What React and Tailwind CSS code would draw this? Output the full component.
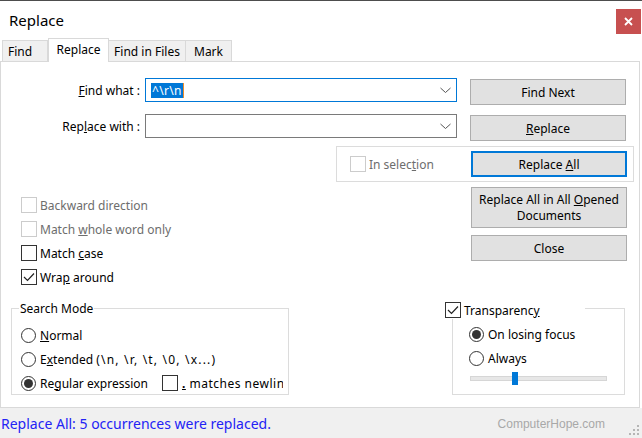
import React from 'react';

const Check = () => (
  <svg width="12" height="10" viewBox="0 0 12 10" className="block">
    <polyline points="1,5 4.5,8.5 11,1.5" fill="none" stroke="#222" strokeWidth="1.2" />
  </svg>
);

const CheckBox = ({ checked, disabled }) => (
  <span
    className={`w-[16px] h-[16px] flex items-center justify-center border bg-white shrink-0 ${
      disabled ? 'border-[#cccccc]' : 'border-[#333333]'
    }`}
  >
    {checked && <Check />}
  </span>
);

const Radio = ({ checked }) => (
  <span className="w-[15px] h-[15px] rounded-full border border-[#333333] bg-white flex items-center justify-center shrink-0">
    {checked && <span className="w-[9px] h-[9px] rounded-full bg-[#333333]" />}
  </span>
);

const Chevron = () => (
  <svg width="11" height="7" viewBox="0 0 11 7" className="block">
    <polyline points="0.5,1 5.5,5.5 10.5,1" fill="none" stroke="#555" strokeWidth="1" />
  </svg>
);

const Button = ({ children, className = '' }) => (
  <div
    className={`w-[156px] flex items-center justify-center text-center bg-[#e1e1e1] leading-[16px] pt-px ${className}`}
  >
    {children}
  </div>
);

const OptionRow = ({ label, checked, disabled }) => (
  <div className="h-[24px] flex items-start">
    <CheckBox checked={checked} disabled={disabled} />
    <span className={`ml-[3px] leading-[18px] ${disabled ? 'text-[#6d6d6d]' : ''}`}>{label}</span>
  </div>
);

export default function App() {
  return (
    <div className="w-[642px] h-[438px] bg-white border-t border-[#4d4d4d] flex flex-col overflow-hidden text-[12px] text-black font-['Noto_Sans',sans-serif]">
      {/* title bar */}
      <div className="h-[37px] flex items-start shrink-0">
        <div className="pl-[9px] pt-[8px] text-[15px] leading-[22px]">Replace</div>
        <div className="ml-auto mt-[8px] mr-[1px] w-[25px] h-[25px] bg-[#c75050] flex items-center justify-center">
          <svg width="9" height="9" viewBox="0 0 9 9">
            <path d="M1 1 L8 8 M8 1 L1 8" stroke="#fff" strokeWidth="1.8" />
          </svg>
        </div>
      </div>

      {/* tabs */}
      <div className="h-[23px] flex items-end pl-[2px] relative z-10 shrink-0">
        <div className="w-[46px] h-[21px] bg-[#f0f0f0] border border-b-0 border-[#d9d9d9] pl-[5px] leading-[21px]">Find</div>
        <div className="w-[61px] h-[24px] -mb-px bg-white border border-b-0 border-[#d9d9d9] flex justify-center leading-[21px]">Replace</div>
        <div className="w-[77px] h-[21px] bg-[#f0f0f0] border border-l-0 border-b-0 border-[#d9d9d9] flex justify-center leading-[21px]">Find in Files</div>
        <div className="w-[46px] h-[21px] bg-[#f0f0f0] border border-l-0 border-b-0 border-[#d9d9d9] flex justify-center leading-[21px]">Mark</div>
      </div>

      {/* panel */}
      <div className="flex-1 border border-[#d9d9d9] mr-[2px] flex flex-col">
        {/* find what */}
        <div className="mt-[16px] flex items-start">
          <div className="w-[139px] text-right leading-[25px]">
            <span className="underline">F</span>ind what :
          </div>
          <div className="ml-[5px] w-[312px] h-[24px] border border-[#0078d7] flex items-center pl-[5px] pr-[5px]">
            <span className="bg-[#0078d7] text-white px-[1px] leading-[15px] tracking-[0.3px]">^\r\n</span>
            <span className="w-px h-[15px] bg-[#f08c28]" />
            <span className="ml-auto"><Chevron /></span>
          </div>
          <Button className="ml-[13px] mt-px h-[26px] border border-[#adadad]">Find Next</Button>
        </div>

        {/* replace with */}
        <div className="mt-[9px] flex items-start">
          <div className="w-[139px] text-right leading-[25px]">
            Rep<span className="underline">l</span>ace with :
          </div>
          <div className="ml-[5px] w-[312px] h-[24px] border border-[#7a7a7a] flex items-center pr-[5px]">
            <span className="ml-auto"><Chevron /></span>
          </div>
          <Button className="ml-[13px] mt-px h-[26px] border border-[#adadad]">
            <span><span className="underline">R</span>eplace</span>
          </Button>
        </div>

        {/* in selection */}
        <div className="mt-[5px] ml-[335px] w-[298px] h-[36px] border border-[#dcdcdc] flex items-start pl-[13px] pr-[6px] shrink-0">
          <div className="mt-[9px] flex items-start">
            <CheckBox disabled />
            <span className="ml-[3px] leading-[18px] text-[#6d6d6d]">
              In selec<span className="underline">t</span>ion
            </span>
          </div>
          <Button className="ml-auto mt-[4px] h-[26px] border-2 border-[#0078d7]">
            <span>Replace <span className="underline">A</span>ll</span>
          </Button>
        </div>

        {/* options + more buttons */}
        <div className="h-[118px] flex shrink-0">
          <div className="pl-[20px] mt-[15px] flex flex-col">
            <OptionRow label="Backward direction" disabled />
            <OptionRow label={<>Match <span className="underline">w</span>hole word only</>} disabled />
            <OptionRow label={<>Match <span className="underline">c</span>ase</>} />
            <OptionRow label={<>Wra<span className="underline">p</span> around</>} checked />
          </div>
          <div className="ml-auto mr-[12px] mt-[5px] flex flex-col">
            <Button className="h-[41px] border border-[#adadad]">
              <span>
                Replace All in All <span className="underline">O</span>pened
                <br />
                Documents
              </span>
            </Button>
            <Button className="mt-[7px] h-[26px] border border-[#adadad]">Close</Button>
          </div>
        </div>

        {/* bottom groups */}
        <div className="flex items-start">
          <div className="mt-[8px] ml-[10px] w-[278px] h-[87px] border border-[#dcdcdc] relative pt-[14px] pl-[9px]">
            <span className="absolute -top-[9px] left-[7px] bg-white px-[1px] leading-[17px]">Search Mode</span>
            <div className="h-[24px] flex items-center">
              <Radio />
              <span className="ml-[4px] mt-px"><span className="underline">N</span>ormal</span>
            </div>
            <div className="h-[24px] flex items-center">
              <Radio />
              <span className="ml-[4px] mt-px">
                E<span className="underline">x</span>tended <span className="tracking-[1.2px]">(\n, \r, \t, \0, \x...)</span>
              </span>
            </div>
            <div className="h-[24px] w-[262px] flex items-center overflow-hidden whitespace-nowrap">
              <Radio checked />
              <span className="ml-[4px] mt-px">Re<span className="underline">g</span>ular expression</span>
              <span className="ml-[14px]"><CheckBox /></span>
              <span className="ml-[4px] mt-px tracking-[0.5px]"><span className="underline font-bold">.</span> matches newline</span>
            </div>
          </div>

          <div className="mt-[8px] ml-[163px] w-[173px] h-[87px] border border-[#dcdcdc] relative pt-[13px] pl-[16px]">
            <div className="absolute -top-[7px] -left-[8px] w-[140px] h-[17px] bg-white flex items-start">
              <CheckBox checked />
              <span className="ml-[3px] leading-[18px]">
                Transparenc<span className="underline">y</span>
              </span>
            </div>
            <div className="h-[24px] flex items-center">
              <Radio checked />
              <span className="ml-[4px] mt-px">On losing focus</span>
            </div>
            <div className="h-[24px] flex items-center">
              <Radio />
              <span className="ml-[4px] mt-px">Always</span>
            </div>
            <div className="mt-[6px] ml-px w-[137px] h-[5px] bg-[#e7e7e7] border border-[#d6d6d6] relative">
              <span className="absolute left-[41px] -top-[5px] w-[6px] h-[13px] bg-[#0078d7]" />
            </div>
          </div>
        </div>
      </div>

      {/* status bar */}
      <div className="h-[30px] bg-[#f0f0f0] flex items-center shrink-0 relative pt-[2px]">
        <span className="pl-[1px] text-[14px] leading-[20px] text-[#2323f5]">Replace All: 5 occurrences were replaced.</span>
        <span className="ml-auto mr-[37px] text-[12px] leading-[20px] text-[#a8a8a8] font-['Liberation_Sans',sans-serif]">ComputerHope.com</span>
        <svg width="11" height="11" viewBox="0 0 11 11" className="absolute right-[2px] bottom-[2px]">
          <rect x="8" y="0" width="2" height="2" fill="#b5b5b5" />
          <rect x="4" y="4" width="2" height="2" fill="#b5b5b5" />
          <rect x="8" y="4" width="2" height="2" fill="#b5b5b5" />
          <rect x="0" y="8" width="2" height="2" fill="#b5b5b5" />
          <rect x="4" y="8" width="2" height="2" fill="#b5b5b5" />
          <rect x="8" y="8" width="2" height="2" fill="#b5b5b5" />
        </svg>
      </div>
    </div>
  );
}
